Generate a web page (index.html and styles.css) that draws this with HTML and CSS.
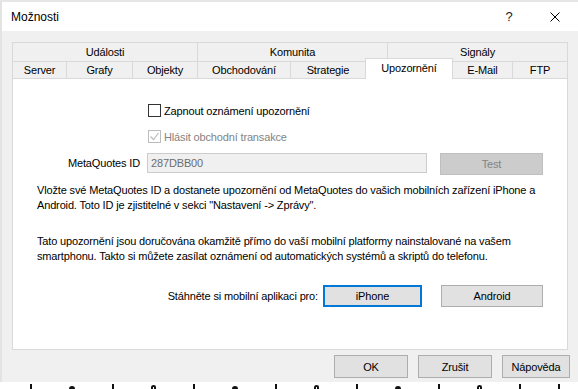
FILE: index.html
```html
<!DOCTYPE html>
<html lang="cs">
<head>
  <meta charset="UTF-8" />
  <title>Možnosti</title>
  <link rel="stylesheet" href="styles.css">
</head>
<body>
  <div class="window">
    <div class="titlebar">
      <span class="title">Možnosti</span>
      <div class="caption-buttons">
        <span class="cap-btn">?</span>
        <span class="cap-btn">
          <svg width="10" height="10" viewBox="0 0 10 10"><path d="M0.5 0.5 L9.5 9.5 M9.5 0.5 L0.5 9.5" stroke="#000" stroke-width="1" fill="none"/></svg>
        </span>
      </div>
    </div>

    <div class="body">
      <div class="tabs">
        <div class="tab-row top">
          <div class="tab">Události</div>
          <div class="tab">Komunita</div>
          <div class="tab">Signály</div>
        </div>
        <div class="tab-row bottom">
          <div class="tab">Server</div>
          <div class="tab">Grafy</div>
          <div class="tab">Objekty</div>
          <div class="tab">Obchodování</div>
          <div class="tab">Strategie</div>
          <div class="tab active">Upozornění</div>
          <div class="tab">E-Mail</div>
          <div class="tab">FTP</div>
        </div>
      </div>

      <div class="page">
        <div class="form">
          <label class="check"><span class="box"></span>Zapnout oznámení upozornění</label>
          <label class="check disabled">
            <span class="box">
              <svg width="11" height="11" viewBox="0 0 11 11"><path d="M1.5 5.5 L4.5 8.5 L9.5 2" stroke="#bcbcbc" stroke-width="1.2" fill="none"/></svg>
            </span>Hlásit obchodní transakce
          </label>
          <span class="field-label">MetaQuotes ID</span>
          <div class="input">287DBB00</div>
          <button class="btn btn-test" disabled>Test</button>
        </div>

        <p class="note">Vložte své MetaQuotes ID a dostanete upozornění od MetaQuotes do vašich mobilních zařízení iPhone a<br>Android. Toto ID je zjistitelné v sekci "Nastavení -&gt; Zprávy".</p>
        <p class="note second">Tato upozornění jsou doručována okamžitě přímo do vaší mobilní platformy nainstalované na vašem<br>smartphonu. Takto si můžete zasílat oznámení od automatických systémů a skriptů do telefonu.</p>

        <div class="download">
          <span class="download-label">Stáhněte si mobilní aplikaci pro:</span>
          <button class="btn focused iphone">iPhone</button>
          <button class="btn android">Android</button>
        </div>
      </div>

      <div class="dialog-buttons">
        <button class="btn ok">OK</button>
        <button class="btn cancel">Zrušit</button>
        <button class="btn help">Nápověda</button>
      </div>
    </div>
  </div>

  <!-- edge of the window behind the dialog -->
  <div class="behind">
    <span class="mark"></span><span class="mark wide"></span><span class="mark"></span>
    <span class="mark round"></span><span class="mark"></span><span class="mark wide"></span>
    <span class="mark"></span><span class="mark round"></span><span class="mark"></span>
    <span class="mark wide"></span><span class="mark"></span><span class="mark round"></span>
    <span class="mark"></span><span class="mark"></span>
  </div>
</body>
</html>
```

FILE: styles.css
```css
* {
  box-sizing: border-box;
}

body {
  margin: 0;
  background: #fff;
  font-family: "Liberation Sans", Arial, sans-serif;
  font-size: 11px;
  letter-spacing: -0.15px;
  color: #000;
}

.window {
  width: 578px;
  height: 382px;
  border-left: 2px solid #e3e3e3;
  border-top: 2px solid #e6e6e6;
  background: #f0f0f0;
  display: flex;
  flex-direction: column;
}

/* title bar */
.titlebar {
  height: 29px;
  background: #fff;
  display: flex;
  align-items: center;
  justify-content: space-between;
  padding-left: 9px;
}

.title {
  font-size: 12px;
  letter-spacing: 0;
}

.caption-buttons {
  display: flex;
}

.cap-btn {
  width: 46px;
  height: 29px;
  display: flex;
  align-items: center;
  justify-content: center;
  font-size: 13px;
  color: #222;
}

/* dialog body */
.body {
  padding: 11px 10px 0 10px;
}

.tab-row {
  display: grid;
}

.tab-row.top {
  grid-template-columns: 185px 190px 181px;
}

.tab-row.bottom {
  grid-template-columns: 54px 66px 65px 93px 75px 88px 59px 56px;
}

.tab {
  border-top: 1px solid #d9d9d9;
  border-left: 1px solid #d9d9d9;
  background: #f0f0f0;
  text-align: center;
}

.tab:last-child {
  border-right: 1px solid #d9d9d9;
}

.tab-row.top .tab {
  height: 19px;
  line-height: 18px;
}

.tab-row.bottom .tab {
  height: 17px;
  line-height: 16px;
}

.tab-row.bottom .tab.active {
  margin: -3px 0 -1px;
  height: 21px;
  line-height: 18px;
  background: #fff;
  border-right: 1px solid #d9d9d9;
  z-index: 1;
}

.tab.active + .tab {
  border-left: none;
}

/* tab page */
.page {
  height: 272px;
  background: #fff;
  border: 1px solid #d9d9d9;
  padding: 25px 0 0 0;
}

.form {
  display: grid;
  grid-template-columns: 134px 293px 103px;
  align-items: start;
}

.check {
  grid-column: 2 / 4;
  display: flex;
  align-items: center;
  gap: 3px;
  height: 13px;
  margin-left: 1px;
}

.check + .check {
  margin-top: 13px;
}

.box {
  width: 13px;
  height: 13px;
  border: 1px solid #333;
  background: #fff;
  display: flex;
  align-items: center;
  justify-content: center;
}

.check.disabled {
  color: #838383;
}

.check.disabled .box {
  border-color: #bcbcbc;
}

.field-label {
  margin-top: 10px;
  padding-right: 7px;
  text-align: right;
  line-height: 20px;
}

.input {
  margin-top: 10px;
  width: 280px;
  height: 20px;
  background: #f0f0f0;
  border: 1px solid #cccccc;
  color: #6d6d6d;
  padding-left: 3px;
  line-height: 18px;
}

.btn {
  font-family: inherit;
  font-size: 11px;
  letter-spacing: inherit;
  color: #000;
  background: #e1e1e1;
  border: 1px solid #adadad;
  padding: 0;
  height: 23px;
}

.btn-test {
  margin-top: 10px;
  width: 103px;
  height: 22px;
  background: #cccccc;
  border-color: #bfbfbf;
  color: #838383;
}

.note {
  margin: 8px 0 0 24px;
  line-height: 15px;
}

.note.second {
  margin-top: 21px;
}

.download {
  margin-top: 21px;
  display: flex;
  align-items: center;
  justify-content: flex-end;
  padding-right: 24px;
}

.download-label {
  margin-right: 5px;
}

.btn.iphone {
  width: 99px;
  height: 22px;
  margin-right: 19px;
}

.btn.android {
  width: 102px;
  height: 22px;
}

.btn.focused {
  border: 2px solid #0078d7;
}

/* OK / Cancel / Help */
.dialog-buttons {
  display: flex;
  justify-content: flex-end;
  gap: 10px;
  margin: 5px -2px 0 0;
}

.btn.ok,
.btn.cancel {
  width: 74px;
}

.btn.help {
  width: 68px;
}

/* window behind the dialog */
.behind {
  height: 7px;
  overflow: hidden;
  background: #fff;
  display: flex;
  justify-content: space-between;
  align-items: flex-end;
  padding: 2px 18px 0 30px;
}

.mark {
  width: 2px;
  height: 5px;
  background: #111;
}

.mark.wide {
  width: 6px;
  height: 3px;
  border-radius: 3px 3px 0 0;
}

.mark.round {
  width: 5px;
  height: 4px;
  background: none;
  border: 2px solid #111;
  border-bottom: none;
  border-radius: 3px 3px 0 0;
}
```
